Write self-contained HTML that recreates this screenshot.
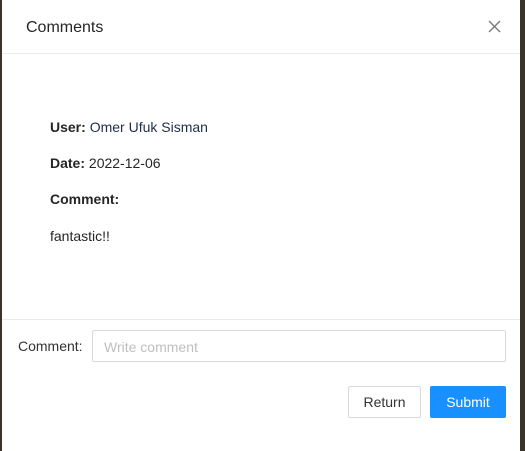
<!DOCTYPE html>
<html><head><style>
*{box-sizing:border-box;margin:0;padding:0}
body{width:525px;height:451px;background:#3a3328;font-family:"Liberation Sans",sans-serif;font-size:14px;position:relative;overflow:hidden}
.m{position:absolute;left:2px;top:0;width:518px;height:451px;background:#fff}
.h{height:54px;border-bottom:1px solid #ebebeb;position:relative}
.t{position:absolute;left:24px;top:19px;font-size:16px;color:#262626}
.x{position:absolute;left:486px;top:20px}
.b{position:absolute;left:48px;color:#262626}
.f{position:absolute;left:0;top:319px;width:100%;border-top:1px solid #ebebeb}
.lbl{position:absolute;left:16px;top:338px;color:#333}
.in{position:absolute;left:90px;top:330px;width:414px;height:32px;border:1px solid #d9d9d9;border-radius:2px;padding:8px 11px;color:#bfbfbf}
.btn{position:absolute;top:386px;height:32px;border-radius:2px;text-align:center;line-height:30px}
</style></head><body>
<div class="m">
<div class="h"><div class="t">Comments</div>
<svg class="x" width="13" height="13" viewBox="0 0 13 13"><path d="M1 1L12 12M12 1L1 12" stroke="#777" stroke-width="1.3"/></svg></div>
<div class="b" style="top:119px"><b>User:</b> <span style="color:#1f2d4d">Omer Ufuk Sisman</span></div>
<div class="b" style="top:155px"><b>Date:</b> 2022-12-06</div>
<div class="b" style="top:191px"><b>Comment:</b></div>
<div class="b" style="top:228px">fantastic!!</div>
<div class="f"></div>
<div class="lbl">Comment:</div>
<div class="in">Write comment</div>
<div class="btn" style="left:346px;width:73px;border:1px solid #d9d9d9;color:#333">Return</div>
<div class="btn" style="left:428px;width:76px;background:#1890ff;color:#fff;line-height:32px">Submit</div>
</div>
</body></html>
